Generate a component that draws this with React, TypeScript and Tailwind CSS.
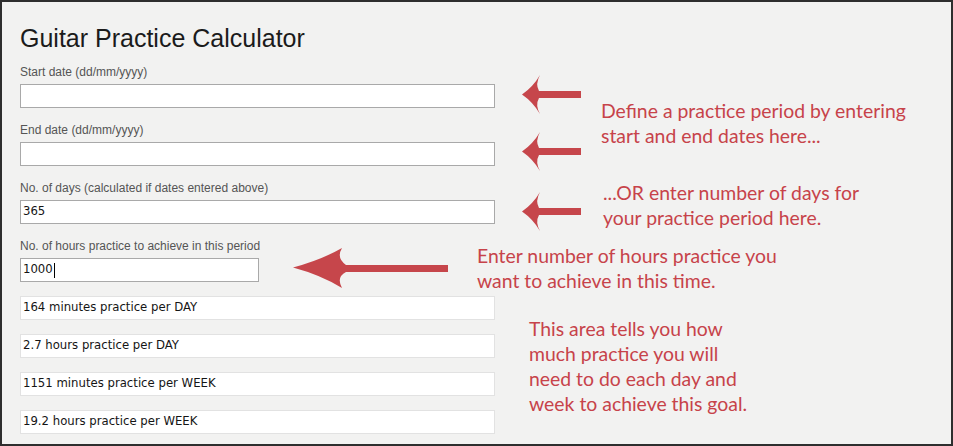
import React from 'react';

const labelCls = "text-[12px] leading-[16px] text-[#555555] mb-[4px]";
const boxCls =
  "h-[24px] bg-white border flex items-center px-[2px] text-[11.7px] text-[#151515] font-['DejaVu_Sans',sans-serif]";
const noteCls =
  "absolute font-['Lato',sans-serif] text-[19.4px] leading-[25px] text-[#c7434a] whitespace-nowrap";

const SmallArrow = ({ className }: { className: string }) => (
  <svg className={className} width="64" height="44" viewBox="0 0 64 44">
    <path
      d="M2 21.5 Q13 14 20 2 Q15 11 19 18 L61 18 L61 25 L19 25 Q15 32 20 41 Q13 29 2 21.5 Z"
      fill="#c6464b"
    />
  </svg>
);

const results = [
  '164 minutes practice per DAY',
  '2.7 hours practice per DAY',
  '1151 minutes practice per WEEK',
  '19.2 hours practice per WEEK',
];

const App = () => {
  return (
    <div className="relative w-[953px] h-[446px] overflow-hidden border-2 border-[#2e2e2e] bg-[#f2f2f1] font-['Liberation_Sans',Arial,sans-serif]">
      <div className="pl-[18px] pt-[21px] flex flex-col items-start">
        <h1 className="text-[25px] leading-[30px] text-[#1b1b1b]">Guitar Practice Calculator</h1>

        <div className={`${labelCls} mt-[11px]`}>Start date (dd/mm/yyyy)</div>
        <div className={`${boxCls} w-[475px] border-[#a9a9a9]`}></div>

        <div className={`${labelCls} mt-[14px]`}>End date (dd/mm/yyyy)</div>
        <div className={`${boxCls} w-[475px] border-[#a9a9a9]`}></div>

        <div className={`${labelCls} mt-[14px]`}>No. of days (calculated if dates entered above)</div>
        <div className={`${boxCls} w-[475px] border-[#a9a9a9]`}>365</div>

        <div className={`${labelCls} mt-[14px]`}>No. of hours practice to achieve in this period</div>
        <div className={`${boxCls} w-[239px] border-[#a9a9a9]`}>
          1000
          <span className="ml-px w-px h-[15px] bg-black"></span>
        </div>

        {results.map((r) => (
          <div key={r} className={`${boxCls} w-[475px] mt-[14px] border-[#e2e2e2]`}>
            {r}
          </div>
        ))}
      </div>

      {/* annotation arrows */}
      <SmallArrow className="absolute left-[518px] top-[71px]" />
      <SmallArrow className="absolute left-[518px] top-[128px]" />
      <SmallArrow className="absolute left-[518px] top-[188px]" />
      <svg className="absolute left-[289px] top-[244px]" width="160" height="44" viewBox="0 0 160 44">
        <path
          d="M2 21.5 Q30 14 51 2 Q45 12 55 19 L157 19 L157 26 L55 26 Q45 31 51 42 Q30 29 2 21.5 Z"
          fill="#c6464b"
        />
      </svg>

      {/* annotation notes */}
      <div className={`${noteCls} left-[599px] top-[96px]`}>
        <div>Define a practice period by entering</div>
        <div>start and end dates here...</div>
      </div>
      <div className={`${noteCls} left-[601px] top-[178px]`}>
        <div>...OR enter number of days for</div>
        <div>your practice period here.</div>
      </div>
      <div className={`${noteCls} left-[475px] top-[241px]`}>
        <div>Enter number of hours practice you</div>
        <div>want to achieve in this time.</div>
      </div>
      <div className={`${noteCls} left-[527px] top-[314px]`}>
        <div>This area tells you how</div>
        <div>much practice you will</div>
        <div>need to do each day and</div>
        <div>week to achieve this goal.</div>
      </div>
    </div>
  );
};

export default App;
